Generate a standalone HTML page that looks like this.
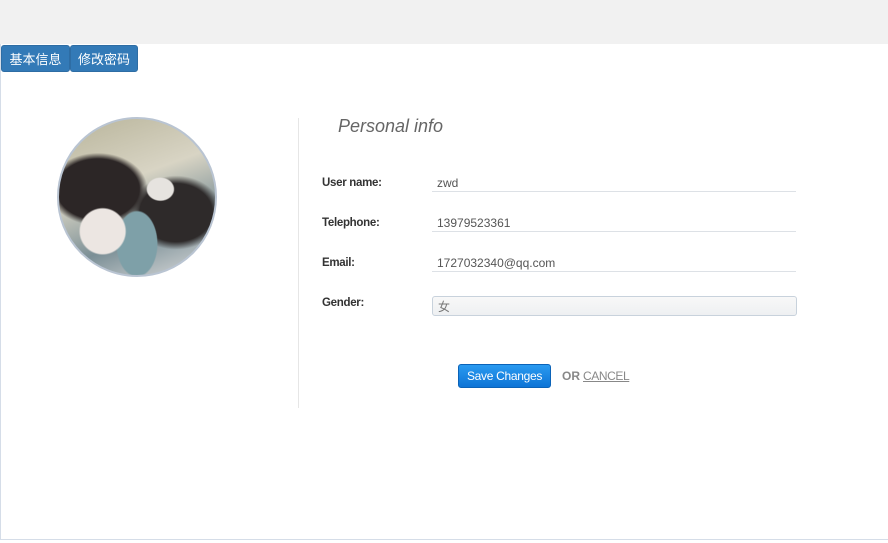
<!DOCTYPE html>
<html><head><meta charset="utf-8"><style>
body{margin:0;width:888px;height:543px;overflow:hidden;background:#fff;font-family:"Liberation Sans","Noto Sans CJK SC",sans-serif;position:relative}
.top{position:absolute;left:0;top:0;width:888px;height:44px;background:#f1f1f1}
.panel{position:absolute;left:0;top:44px;width:887px;height:495px;border-left:1px solid #d5dde8;border-bottom:1px solid #d5dde8;background:#fff}
.tab{position:absolute;top:45px;height:27px;background:#337ab7;color:#fff;font-size:13px;line-height:27px;text-align:center;border-radius:3px;border:1px solid #2e6da4;box-sizing:border-box}
.av{position:absolute;left:57px;top:117px;width:160px;height:160px;border-radius:50%;box-sizing:border-box;border:2px solid #b9c4d2;overflow:hidden;
background:radial-gradient(ellipse at 28% 72%,#ece6e2 0 14%,transparent 15%),radial-gradient(ellipse at 65% 45%,#e6e3df 0 9%,transparent 10%),radial-gradient(ellipse at 50% 80%,#7ea0a8 0 18%,transparent 19%),radial-gradient(ellipse at 25% 45%,#2c2626 0 25%,transparent 30%),radial-gradient(ellipse at 75% 60%,#2e2a2a 0 22%,transparent 28%),linear-gradient(160deg,#b8b49a,#d8d4c4 40%,#7b8f96 70%,#dcdcdc)}
.div{position:absolute;left:298px;top:118px;width:1px;height:290px;background:#e6e6e6}
h2{position:absolute;left:338px;top:116px;margin:0;font-size:18px;font-style:italic;font-weight:normal;color:#666}
.lbl{position:absolute;left:322px;font-size:11.5px;font-weight:bold;color:#333;letter-spacing:-0.3px}
.val{position:absolute;left:432px;width:364px;height:16px;border-bottom:1px solid #dde1e6;font-size:12px;color:#555;padding-left:5px;box-sizing:border-box;line-height:14px}
.sel{position:absolute;left:432px;top:296px;width:365px;height:20px;border:1px solid #c8d2dc;border-radius:3px;box-sizing:border-box;background:linear-gradient(#f8f8f8,#eef0f2);font-size:12px;color:#777;padding-left:5px;line-height:20px}
.btn{position:absolute;left:458px;top:364px;width:93px;height:24px;background:linear-gradient(#2a9af0,#0d74d6);border:1px solid #0b63b8;border-radius:3px;box-sizing:border-box;color:#fff;font-size:12px;line-height:22px;text-align:center;letter-spacing:-0.3px}
.or{position:absolute;left:562px;top:369px;font-size:12px;font-weight:bold;color:#888}
.cancel{position:absolute;left:583px;top:369px;font-size:12px;color:#888;text-decoration:underline;letter-spacing:-0.4px}
</style></head><body>
<div class="top"></div>
<div class="panel"></div>
<div class="tab" style="left:1px;width:69px">基本信息</div>
<div class="tab" style="left:70px;width:68px">修改密码</div>
<div class="av"></div>
<div class="div"></div>
<h2>Personal info</h2>
<div class="lbl" style="top:177px">User name:</div><div class="val" style="top:176px">zwd</div>
<div class="lbl" style="top:217px">Telephone:</div><div class="val" style="top:216px">13979523361</div>
<div class="lbl" style="top:257px">Email:</div><div class="val" style="top:256px">1727032340@qq.com</div>
<div class="lbl" style="top:297px">Gender:</div><div class="sel">女</div>
<div class="btn">Save Changes</div>
<div class="or">OR</div><div class="cancel">CANCEL</div>
</body></html>
